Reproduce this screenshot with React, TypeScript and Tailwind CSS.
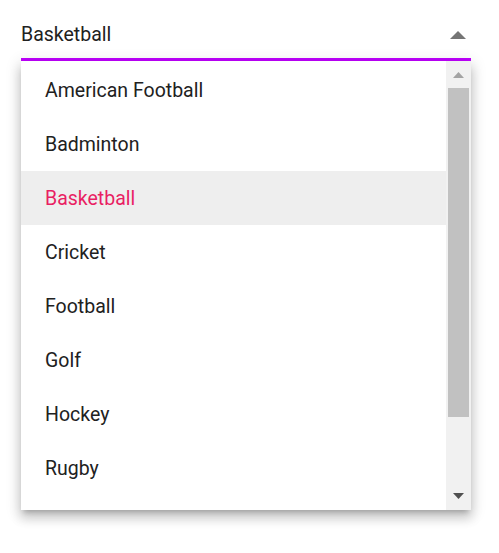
import React from "react";

const items = ["American Football", "Badminton", "Basketball", "Cricket", "Football", "Golf", "Hockey", "Rugby"];

export default function App() {
  return (
    <div className="w-[499px] h-[553px] bg-white" style={{ fontFamily: "Roboto, 'Noto Sans', sans-serif" }}>
      <div className="ml-[21px] w-[450px] pt-[16px]">
        <div className="h-[42px] flex items-center justify-between pb-[4px]">
          <span className="text-[19.5px] text-[#212121] leading-none">Basketball</span>
          <svg width="16" height="8" viewBox="0 0 16 8" className="mr-[5px]">
            <polygon points="0,8 8,0 16,8" fill="#757575" />
          </svg>
        </div>
        <div className="h-[3px] bg-[#c000ff]" />
        <div className="h-[449px] bg-white flex shadow-[0_5px_5px_-3px_rgba(0,0,0,0.2),0_8px_10px_1px_rgba(0,0,0,0.14),0_3px_14px_2px_rgba(0,0,0,0.12)]">
          <div className="flex-1 overflow-hidden pt-[2px]">
            {items.map((it) => (
              <div
                key={it}
                className={
                  it === "Basketball"
                    ? "h-[54px] flex items-center pl-[24px] pt-[1px] text-[19.5px] bg-[#eeeeee] text-[#e91e63]"
                    : "h-[54px] flex items-center pl-[24px] pt-[1px] text-[19.5px] text-[#212121]"
                }
              >
                {it}
              </div>
            ))}
          </div>
          <div className="w-[25px] bg-[#f1f1f1] flex flex-col items-center">
            <div className="h-[27px] flex items-center justify-center">
              <svg width="11" height="6" viewBox="0 0 11 6">
                <polygon points="0,6 5.5,0 11,6" fill="#a3a3a3" />
              </svg>
            </div>
            <div className="w-[21px] h-[329px] bg-[#c1c1c1]" />
            <div className="flex-1 flex items-end justify-center pb-[11px]">
              <svg width="11" height="6" viewBox="0 0 11 6">
                <polygon points="0,0 5.5,6 11,0" fill="#505050" />
              </svg>
            </div>
          </div>
        </div>
      </div>
    </div>
  );
}
